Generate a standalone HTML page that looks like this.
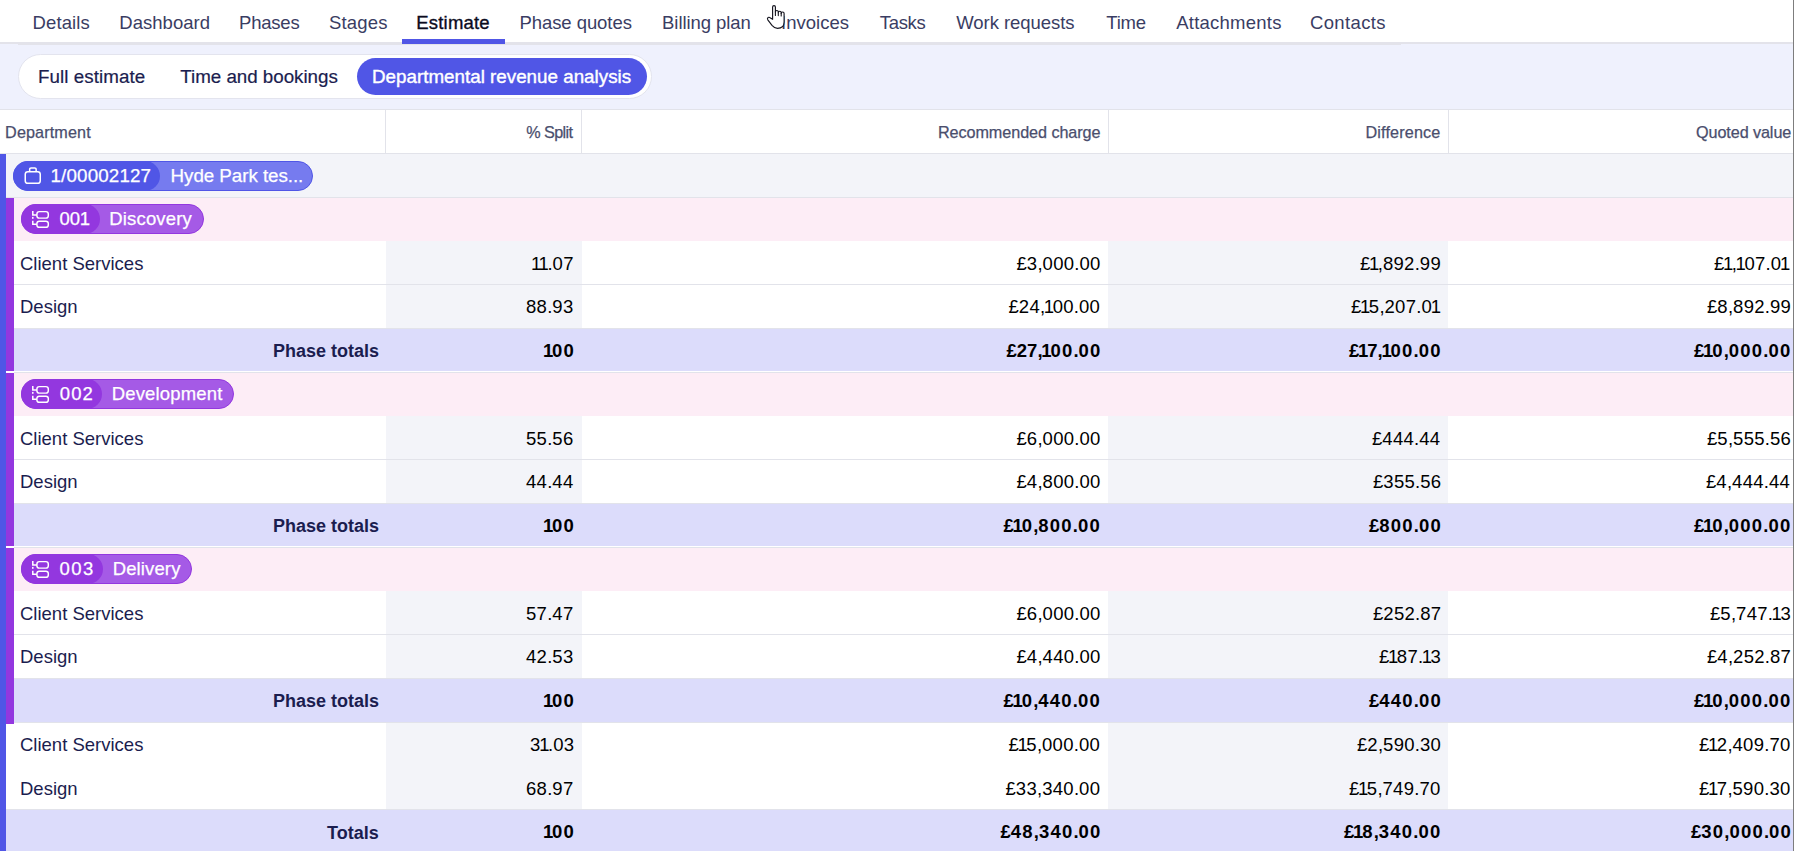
<!DOCTYPE html><html><head><meta charset="utf-8"><style>
*{box-sizing:border-box;margin:0;padding:0}
html,body{width:1794px;height:851px;overflow:hidden;background:#fff;font-family:"Liberation Sans", sans-serif}
.abs{position:absolute}
.t{position:absolute;white-space:nowrap;line-height:1}
</style></head><body>
<div class="abs" style="left:0px;top:42px;width:1794px;height:2px;background:#e3e3ea;"></div>
<div class="abs" style="left:18px;top:44px;width:1383px;height:1px;background:#e3e3ea;"></div>
<div class="abs" style="left:402px;top:39px;width:103px;height:5px;background:#5056e6;"></div>
<div class="t" style="left:32.6px;top:14.14px;font-size:18.5px;color:#3a3d63;font-weight:400;letter-spacing:0.083px;">Details</div>
<div class="t" style="left:119.3px;top:14.14px;font-size:18.5px;color:#3a3d63;font-weight:400;letter-spacing:0.025px;">Dashboard</div>
<div class="t" style="left:239px;top:14.14px;font-size:18.5px;color:#3a3d63;font-weight:400;letter-spacing:-0.2px;">Phases</div>
<div class="t" style="left:329px;top:14.14px;font-size:18.5px;color:#3a3d63;font-weight:400;letter-spacing:0.18px;">Stages</div>
<div class="t" style="left:416.3px;top:14.14px;font-size:18.5px;color:#0b0b1e;font-weight:400;-webkit-text-stroke:0.35px #0b0b1e;letter-spacing:0.186px;">Estimate</div>
<div class="t" style="left:519.4px;top:14.14px;font-size:18.5px;color:#3a3d63;font-weight:400;letter-spacing:-0.055px;">Phase quotes</div>
<div class="t" style="left:662.1px;top:14.14px;font-size:18.5px;color:#3a3d63;font-weight:400;letter-spacing:-0.082px;">Billing plan</div>
<div class="t" style="right:945.02px;top:14.14px;font-size:18.5px;color:#3a3d63;font-weight:400;">Invoices</div>
<div class="t" style="left:879.7px;top:14.14px;font-size:18.5px;color:#3a3d63;font-weight:400;letter-spacing:-0.3px;">Tasks</div>
<div class="t" style="left:956.3px;top:14.14px;font-size:18.5px;color:#3a3d63;font-weight:400;letter-spacing:-0.05px;">Work requests</div>
<div class="t" style="left:1106.3px;top:14.14px;font-size:18.5px;color:#3a3d63;font-weight:400;letter-spacing:-0.233px;">Time</div>
<div class="t" style="left:1176.3px;top:14.14px;font-size:18.5px;color:#3a3d63;font-weight:400;letter-spacing:0.23px;">Attachments</div>
<div class="t" style="left:1310px;top:14.14px;font-size:18.5px;color:#3a3d63;font-weight:400;letter-spacing:0.357px;">Contacts</div>
<div class="abs" style="left:0px;top:44px;width:18px;height:65px;background:#eff1fd;"></div>
<div class="abs" style="left:1401px;top:44px;width:393px;height:65px;background:#eff1fd;"></div>
<div class="abs" style="left:18px;top:45px;width:1383px;height:64px;background:#eff1fd;"></div>
<div class="abs" style="left:0px;top:109px;width:1794px;height:1px;background:#e2e3ea;"></div>
<div class="abs" style="left:18px;top:54px;width:634px;height:45px;background:#fff;border:1px solid #e3e4ee;border-radius:23px"></div>
<div class="abs" style="left:357px;top:58px;width:290px;height:37px;background:#5056e6;border-radius:19px"></div>
<div class="t" style="left:37.9px;top:67.89px;font-size:18.8px;color:#1b1d4f;font-weight:400;-webkit-text-stroke:0.2px #1b1d4f;letter-spacing:0.067px;">Full estimate</div>
<div class="t" style="left:180.3px;top:67.89px;font-size:18.8px;color:#1b1d4f;font-weight:400;-webkit-text-stroke:0.2px #1b1d4f;letter-spacing:-0.031px;">Time and bookings</div>
<div class="t" style="left:372px;top:67.89px;font-size:18.8px;color:#fff;font-weight:400;-webkit-text-stroke:0.4px #fff;letter-spacing:0.007px;">Departmental revenue analysis</div>
<div class="abs" style="left:0px;top:153px;width:1794px;height:1px;background:#e2e3ea;"></div>
<div class="abs" style="left:385px;top:110px;width:1px;height:43px;background:#e2e3ea;"></div>
<div class="abs" style="left:581px;top:110px;width:1px;height:43px;background:#e2e3ea;"></div>
<div class="abs" style="left:1108px;top:110px;width:1px;height:43px;background:#e2e3ea;"></div>
<div class="abs" style="left:1448px;top:110px;width:1px;height:43px;background:#e2e3ea;"></div>
<div class="t" style="left:5.1px;top:123.59px;font-size:16.2px;color:#4a4e6d;font-weight:400;-webkit-text-stroke:0.25px #4a4e6d;letter-spacing:0.111px;">Department</div>
<div class="t" style="left:526.3px;top:123.59px;font-size:16.2px;color:#4a4e6d;font-weight:400;-webkit-text-stroke:0.25px #4a4e6d;letter-spacing:-0.617px;">% Split</div>
<div class="t" style="left:937.9px;top:123.59px;font-size:16.2px;color:#4a4e6d;font-weight:400;-webkit-text-stroke:0.25px #4a4e6d;letter-spacing:-0.065px;">Recommended charge</div>
<div class="t" style="left:1365.4px;top:123.59px;font-size:16.2px;color:#4a4e6d;font-weight:400;-webkit-text-stroke:0.25px #4a4e6d;letter-spacing:0.167px;">Difference</div>
<div class="t" style="left:1696px;top:123.59px;font-size:16.2px;color:#4a4e6d;font-weight:400;-webkit-text-stroke:0.25px #4a4e6d;letter-spacing:-0.091px;">Quoted value</div>
<div class="abs" style="left:0px;top:154px;width:1794px;height:43px;background:#f3f4f9;"></div>
<div class="abs" style="left:0px;top:197px;width:1794px;height:1px;background:#e2e3ea;"></div>
<div class="abs" style="left:0px;top:154px;width:6px;height:697px;background:#5056e6;"></div>
<div class="abs" style="left:13px;top:161px;width:300.3px;height:30px;background:#767bef;border-radius:15px;border:1px solid #5056e6"></div>
<div class="abs" style="left:13px;top:161px;width:147.3px;height:30px;background:#5056e6;border-radius:15px"></div>
<svg class="abs" style="left:24px;top:166px" width="18" height="19" viewBox="0 0 18 19"><rect x="1.25" y="5.65" width="15" height="11.6" rx="2.6" fill="none" stroke="#fff" stroke-width="1.5"/><path d="M5.65 5.65V3.4a1.4 1.4 0 0 1 1.4-1.45h3.7a1.4 1.4 0 0 1 1.4 1.45V5.65" fill="none" stroke="#fff" stroke-width="1.5"/></svg>
<div class="t" style="left:50.5px;top:167.09px;font-size:18.8px;color:#fff;font-weight:400;-webkit-text-stroke:0.25px #fff;letter-spacing:0.144px;">1/00002127</div>
<div class="t" style="left:170.6px;top:167.09px;font-size:18.8px;color:#fff;font-weight:400;-webkit-text-stroke:0.25px #fff;letter-spacing:-0.06px;">Hyde Park tes...</div>
<div class="abs" style="left:6px;top:198px;width:8px;height:173px;background:#9337df;"></div>
<div class="abs" style="left:14px;top:198px;width:1780px;height:43px;background:#fdedf6;"></div>
<div class="abs" style="left:21px;top:204px;width:183px;height:30px;background:#a55ae6;border-radius:15px;border:1px solid #9337df"></div>
<div class="abs" style="left:21px;top:204px;width:78.6px;height:30px;background:#9337df;border-radius:15px"></div>
<svg class="abs" style="left:28px;top:207px" width="26" height="24" viewBox="0 0 26 24"><rect x="8.9" y="4.6" width="11.4" height="6.5" rx="2.4" fill="none" stroke="#fff" stroke-width="1.45"/><rect x="8.9" y="14.2" width="11.4" height="6.1" rx="2.4" fill="none" stroke="#fff" stroke-width="1.45"/><path d="M4.8 3.9V7.9H8.9M4.8 13.7V17.3H8.9" fill="none" stroke="#fff" stroke-width="1.5"/><rect x="4.05" y="9.9" width="1.5" height="1.9" fill="#fff"/></svg>
<div class="t" style="left:59.5px;top:210.34px;font-size:18.5px;color:#fff;font-weight:400;-webkit-text-stroke:0.25px #fff;letter-spacing:-0.15px;">001</div>
<div class="t" style="left:109.3px;top:210.34px;font-size:18.5px;color:#fff;font-weight:400;-webkit-text-stroke:0.25px #fff;letter-spacing:0.162px;">Discovery</div>
<div class="abs" style="left:386px;top:241px;width:196px;height:43px;background:#f3f4f9;"></div>
<div class="abs" style="left:1108px;top:241px;width:340px;height:43px;background:#f3f4f9;"></div>
<div class="abs" style="left:14px;top:284px;width:1780px;height:1px;background:#e2e3ea;"></div>
<div class="t" style="left:20px;top:255.14px;font-size:18.5px;color:#1b1d4f;font-weight:400;">Client Services</div>
<div class="t" style="right:1220.28px;top:255.14px;font-size:18.5px;color:#000000;font-weight:400;"><span style="letter-spacing:-2.8px">1</span><span style="letter-spacing:-1.4px">1</span>.<span style="letter-spacing:0.3px">0</span><span style="letter-spacing:0.3px">7</span></div>
<div class="t" style="right:693.36px;top:255.14px;font-size:18.5px;color:#000000;font-weight:400;">£<span style="letter-spacing:0.3px">3</span>,<span style="letter-spacing:0.3px">0</span><span style="letter-spacing:0.3px">0</span><span style="letter-spacing:0.3px">0</span>.<span style="letter-spacing:0.3px">0</span><span style="letter-spacing:0.3px">0</span></div>
<div class="t" style="right:352.97px;top:255.14px;font-size:18.5px;color:#000000;font-weight:400;"><span style="letter-spacing:-1.4px">£</span><span style="letter-spacing:-1.4px">1</span>,<span style="letter-spacing:0.3px">8</span><span style="letter-spacing:0.3px">9</span><span style="letter-spacing:0.3px">2</span>.<span style="letter-spacing:0.3px">9</span><span style="letter-spacing:0.3px">9</span></div>
<div class="t" style="right:5.16px;top:255.14px;font-size:18.5px;color:#000000;font-weight:400;"><span style="letter-spacing:-1.4px">£</span><span style="letter-spacing:-1.4px">1</span><span style="letter-spacing:-1.4px">,</span><span style="letter-spacing:-1.4px">1</span><span style="letter-spacing:0.3px">0</span><span style="letter-spacing:0.3px">7</span>.<span style="letter-spacing:-1.1px">0</span><span style="letter-spacing:-1.4px">1</span></div>
<div class="abs" style="left:386px;top:285px;width:196px;height:43px;background:#f3f4f9;"></div>
<div class="abs" style="left:1108px;top:285px;width:340px;height:43px;background:#f3f4f9;"></div>
<div class="abs" style="left:14px;top:328px;width:1780px;height:1px;background:#e2e3ea;"></div>
<div class="t" style="left:20px;top:298.14px;font-size:18.5px;color:#1b1d4f;font-weight:400;">Design</div>
<div class="t" style="right:1220.48px;top:298.14px;font-size:18.5px;color:#000000;font-weight:400;"><span style="letter-spacing:0.3px">8</span><span style="letter-spacing:0.3px">8</span>.<span style="letter-spacing:0.3px">9</span><span style="letter-spacing:0.3px">3</span></div>
<div class="t" style="right:693.86px;top:298.14px;font-size:18.5px;color:#000000;font-weight:400;">£<span style="letter-spacing:0.3px">2</span><span style="letter-spacing:0.3px">4</span><span style="letter-spacing:-1.4px">,</span><span style="letter-spacing:-1.4px">1</span><span style="letter-spacing:0.3px">0</span><span style="letter-spacing:0.3px">0</span>.<span style="letter-spacing:0.3px">0</span><span style="letter-spacing:0.3px">0</span></div>
<div class="t" style="right:354.47px;top:298.14px;font-size:18.5px;color:#000000;font-weight:400;"><span style="letter-spacing:-1.4px">£</span><span style="letter-spacing:-1.4px">1</span><span style="letter-spacing:0.3px">5</span>,<span style="letter-spacing:0.3px">2</span><span style="letter-spacing:0.3px">0</span><span style="letter-spacing:0.3px">7</span>.<span style="letter-spacing:-1.1px">0</span><span style="letter-spacing:-1.4px">1</span></div>
<div class="t" style="right:2.86px;top:298.14px;font-size:18.5px;color:#000000;font-weight:400;">£<span style="letter-spacing:0.3px">8</span>,<span style="letter-spacing:0.3px">8</span><span style="letter-spacing:0.3px">9</span><span style="letter-spacing:0.3px">2</span>.<span style="letter-spacing:0.3px">9</span><span style="letter-spacing:0.3px">9</span></div>
<div class="abs" style="left:14px;top:329px;width:1780px;height:42px;background:#dcdcfb;"></div>
<div class="t" style="right:1414.95px;top:342.26px;font-size:18px;color:#1b1d4f;font-weight:700;">Phase totals</div>
<div class="t" style="right:1218.91px;top:341.84px;font-size:18.5px;color:#000000;font-weight:700;"><span style="letter-spacing:-1.2px">1</span><span style="letter-spacing:1.2px">0</span><span style="letter-spacing:1.2px">0</span></div>
<div class="t" style="right:692.44px;top:341.84px;font-size:18.5px;color:#000000;font-weight:700;">£27<span style="letter-spacing:-1.2px">,</span><span style="letter-spacing:-1.2px">1</span><span style="letter-spacing:1.2px">0</span><span style="letter-spacing:1.2px">0</span>.<span style="letter-spacing:1.2px">0</span><span style="letter-spacing:1.2px">0</span></div>
<div class="t" style="right:352.33px;top:341.84px;font-size:18.5px;color:#000000;font-weight:700;"><span style="letter-spacing:-1.2px">£</span><span style="letter-spacing:-1.2px">1</span>7<span style="letter-spacing:-1.2px">,</span><span style="letter-spacing:-1.2px">1</span><span style="letter-spacing:1.2px">0</span><span style="letter-spacing:1.2px">0</span>.<span style="letter-spacing:1.2px">0</span><span style="letter-spacing:1.2px">0</span></div>
<div class="t" style="right:2.53px;top:341.84px;font-size:18.5px;color:#000000;font-weight:700;"><span style="letter-spacing:-1.2px">£</span><span style="letter-spacing:-1.2px">1</span><span style="letter-spacing:1.2px">0</span>,<span style="letter-spacing:1.2px">0</span><span style="letter-spacing:1.2px">0</span><span style="letter-spacing:1.2px">0</span>.<span style="letter-spacing:1.2px">0</span><span style="letter-spacing:1.2px">0</span></div>
<div class="abs" style="left:14px;top:372px;width:1780px;height:1px;background:#e2e3ea;"></div>
<div class="abs" style="left:6px;top:373px;width:8px;height:173px;background:#9337df;"></div>
<div class="abs" style="left:14px;top:373px;width:1780px;height:43px;background:#fdedf6;"></div>
<div class="abs" style="left:21px;top:379px;width:212.7px;height:30px;background:#a55ae6;border-radius:15px;border:1px solid #9337df"></div>
<div class="abs" style="left:21px;top:379px;width:81px;height:30px;background:#9337df;border-radius:15px"></div>
<svg class="abs" style="left:28px;top:382px" width="26" height="24" viewBox="0 0 26 24"><rect x="8.9" y="4.6" width="11.4" height="6.5" rx="2.4" fill="none" stroke="#fff" stroke-width="1.45"/><rect x="8.9" y="14.2" width="11.4" height="6.1" rx="2.4" fill="none" stroke="#fff" stroke-width="1.45"/><path d="M4.8 3.9V7.9H8.9M4.8 13.7V17.3H8.9" fill="none" stroke="#fff" stroke-width="1.5"/><rect x="4.05" y="9.9" width="1.5" height="1.9" fill="#fff"/></svg>
<div class="t" style="left:59.8px;top:385.34px;font-size:18.5px;color:#fff;font-weight:400;-webkit-text-stroke:0.25px #fff;letter-spacing:1.05px;">002</div>
<div class="t" style="left:111.7px;top:385.34px;font-size:18.5px;color:#fff;font-weight:400;-webkit-text-stroke:0.25px #fff;letter-spacing:0.17px;">Development</div>
<div class="abs" style="left:386px;top:416px;width:196px;height:43px;background:#f3f4f9;"></div>
<div class="abs" style="left:1108px;top:416px;width:340px;height:43px;background:#f3f4f9;"></div>
<div class="abs" style="left:14px;top:459px;width:1780px;height:1px;background:#e2e3ea;"></div>
<div class="t" style="left:20px;top:430.14px;font-size:18.5px;color:#1b1d4f;font-weight:400;">Client Services</div>
<div class="t" style="right:1220.48px;top:430.14px;font-size:18.5px;color:#000000;font-weight:400;"><span style="letter-spacing:0.3px">5</span><span style="letter-spacing:0.3px">5</span>.<span style="letter-spacing:0.3px">5</span><span style="letter-spacing:0.3px">6</span></div>
<div class="t" style="right:693.36px;top:430.14px;font-size:18.5px;color:#000000;font-weight:400;">£<span style="letter-spacing:0.3px">6</span>,<span style="letter-spacing:0.3px">0</span><span style="letter-spacing:0.3px">0</span><span style="letter-spacing:0.3px">0</span>.<span style="letter-spacing:0.3px">0</span><span style="letter-spacing:0.3px">0</span></div>
<div class="t" style="right:353.59px;top:430.14px;font-size:18.5px;color:#000000;font-weight:400;">£<span style="letter-spacing:0.3px">4</span><span style="letter-spacing:0.3px">4</span><span style="letter-spacing:0.3px">4</span>.<span style="letter-spacing:0.3px">4</span><span style="letter-spacing:0.3px">4</span></div>
<div class="t" style="right:2.86px;top:430.14px;font-size:18.5px;color:#000000;font-weight:400;">£<span style="letter-spacing:0.3px">5</span>,<span style="letter-spacing:0.3px">5</span><span style="letter-spacing:0.3px">5</span><span style="letter-spacing:0.3px">5</span>.<span style="letter-spacing:0.3px">5</span><span style="letter-spacing:0.3px">6</span></div>
<div class="abs" style="left:386px;top:460px;width:196px;height:43px;background:#f3f4f9;"></div>
<div class="abs" style="left:1108px;top:460px;width:340px;height:43px;background:#f3f4f9;"></div>
<div class="abs" style="left:14px;top:503px;width:1780px;height:1px;background:#e2e3ea;"></div>
<div class="t" style="left:20px;top:473.14px;font-size:18.5px;color:#1b1d4f;font-weight:400;">Design</div>
<div class="t" style="right:1220.48px;top:473.14px;font-size:18.5px;color:#000000;font-weight:400;"><span style="letter-spacing:0.3px">4</span><span style="letter-spacing:0.3px">4</span>.<span style="letter-spacing:0.3px">4</span><span style="letter-spacing:0.3px">4</span></div>
<div class="t" style="right:693.36px;top:473.14px;font-size:18.5px;color:#000000;font-weight:400;">£<span style="letter-spacing:0.3px">4</span>,<span style="letter-spacing:0.3px">8</span><span style="letter-spacing:0.3px">0</span><span style="letter-spacing:0.3px">0</span>.<span style="letter-spacing:0.3px">0</span><span style="letter-spacing:0.3px">0</span></div>
<div class="t" style="right:352.59px;top:473.14px;font-size:18.5px;color:#000000;font-weight:400;">£<span style="letter-spacing:0.3px">3</span><span style="letter-spacing:0.3px">5</span><span style="letter-spacing:0.3px">5</span>.<span style="letter-spacing:0.3px">5</span><span style="letter-spacing:0.3px">6</span></div>
<div class="t" style="right:3.86px;top:473.14px;font-size:18.5px;color:#000000;font-weight:400;">£<span style="letter-spacing:0.3px">4</span>,<span style="letter-spacing:0.3px">4</span><span style="letter-spacing:0.3px">4</span><span style="letter-spacing:0.3px">4</span>.<span style="letter-spacing:0.3px">4</span><span style="letter-spacing:0.3px">4</span></div>
<div class="abs" style="left:14px;top:504px;width:1780px;height:42px;background:#dcdcfb;"></div>
<div class="t" style="right:1414.95px;top:517.26px;font-size:18px;color:#1b1d4f;font-weight:700;">Phase totals</div>
<div class="t" style="right:1218.91px;top:516.84px;font-size:18.5px;color:#000000;font-weight:700;"><span style="letter-spacing:-1.2px">1</span><span style="letter-spacing:1.2px">0</span><span style="letter-spacing:1.2px">0</span></div>
<div class="t" style="right:693.03px;top:516.84px;font-size:18.5px;color:#000000;font-weight:700;"><span style="letter-spacing:-1.2px">£</span><span style="letter-spacing:-1.2px">1</span><span style="letter-spacing:1.2px">0</span>,<span style="letter-spacing:1.2px">8</span><span style="letter-spacing:1.2px">0</span><span style="letter-spacing:1.2px">0</span>.<span style="letter-spacing:1.2px">0</span><span style="letter-spacing:1.2px">0</span></div>
<div class="t" style="right:352.06px;top:516.84px;font-size:18.5px;color:#000000;font-weight:700;">£<span style="letter-spacing:1.2px">8</span><span style="letter-spacing:1.2px">0</span><span style="letter-spacing:1.2px">0</span>.<span style="letter-spacing:1.2px">0</span><span style="letter-spacing:1.2px">0</span></div>
<div class="t" style="right:2.53px;top:516.84px;font-size:18.5px;color:#000000;font-weight:700;"><span style="letter-spacing:-1.2px">£</span><span style="letter-spacing:-1.2px">1</span><span style="letter-spacing:1.2px">0</span>,<span style="letter-spacing:1.2px">0</span><span style="letter-spacing:1.2px">0</span><span style="letter-spacing:1.2px">0</span>.<span style="letter-spacing:1.2px">0</span><span style="letter-spacing:1.2px">0</span></div>
<div class="abs" style="left:14px;top:547px;width:1780px;height:1px;background:#e2e3ea;"></div>
<div class="abs" style="left:6px;top:548px;width:8px;height:176px;background:#9337df;"></div>
<div class="abs" style="left:14px;top:548px;width:1780px;height:43px;background:#fdedf6;"></div>
<div class="abs" style="left:21px;top:554px;width:171px;height:30px;background:#a55ae6;border-radius:15px;border:1px solid #9337df"></div>
<div class="abs" style="left:21px;top:554px;width:82px;height:30px;background:#9337df;border-radius:15px"></div>
<svg class="abs" style="left:28px;top:557px" width="26" height="24" viewBox="0 0 26 24"><rect x="8.9" y="4.6" width="11.4" height="6.5" rx="2.4" fill="none" stroke="#fff" stroke-width="1.45"/><rect x="8.9" y="14.2" width="11.4" height="6.1" rx="2.4" fill="none" stroke="#fff" stroke-width="1.45"/><path d="M4.8 3.9V7.9H8.9M4.8 13.7V17.3H8.9" fill="none" stroke="#fff" stroke-width="1.5"/><rect x="4.05" y="9.9" width="1.5" height="1.9" fill="#fff"/></svg>
<div class="t" style="left:59.5px;top:560.34px;font-size:18.5px;color:#fff;font-weight:400;-webkit-text-stroke:0.25px #fff;letter-spacing:1.4px;">003</div>
<div class="t" style="left:112.7px;top:560.34px;font-size:18.5px;color:#fff;font-weight:400;-webkit-text-stroke:0.25px #fff;letter-spacing:0.129px;">Delivery</div>
<div class="abs" style="left:386px;top:591px;width:196px;height:43px;background:#f3f4f9;"></div>
<div class="abs" style="left:1108px;top:591px;width:340px;height:43px;background:#f3f4f9;"></div>
<div class="abs" style="left:14px;top:634px;width:1780px;height:1px;background:#e2e3ea;"></div>
<div class="t" style="left:20px;top:605.14px;font-size:18.5px;color:#1b1d4f;font-weight:400;">Client Services</div>
<div class="t" style="right:1220.48px;top:605.14px;font-size:18.5px;color:#000000;font-weight:400;"><span style="letter-spacing:0.3px">5</span><span style="letter-spacing:0.3px">7</span>.<span style="letter-spacing:0.3px">4</span><span style="letter-spacing:0.3px">7</span></div>
<div class="t" style="right:693.36px;top:605.14px;font-size:18.5px;color:#000000;font-weight:400;">£<span style="letter-spacing:0.3px">6</span>,<span style="letter-spacing:0.3px">0</span><span style="letter-spacing:0.3px">0</span><span style="letter-spacing:0.3px">0</span>.<span style="letter-spacing:0.3px">0</span><span style="letter-spacing:0.3px">0</span></div>
<div class="t" style="right:352.59px;top:605.14px;font-size:18.5px;color:#000000;font-weight:400;">£<span style="letter-spacing:0.3px">2</span><span style="letter-spacing:0.3px">5</span><span style="letter-spacing:0.3px">2</span>.<span style="letter-spacing:0.3px">8</span><span style="letter-spacing:0.3px">7</span></div>
<div class="t" style="right:2.95px;top:605.14px;font-size:18.5px;color:#000000;font-weight:400;">£<span style="letter-spacing:0.3px">5</span>,<span style="letter-spacing:0.3px">7</span><span style="letter-spacing:0.3px">4</span><span style="letter-spacing:0.3px">7</span><span style="letter-spacing:-1.4px">.</span><span style="letter-spacing:-1.4px">1</span><span style="letter-spacing:0.3px">3</span></div>
<div class="abs" style="left:386px;top:635px;width:196px;height:43px;background:#f3f4f9;"></div>
<div class="abs" style="left:1108px;top:635px;width:340px;height:43px;background:#f3f4f9;"></div>
<div class="abs" style="left:14px;top:678px;width:1780px;height:1px;background:#e2e3ea;"></div>
<div class="t" style="left:20px;top:648.14px;font-size:18.5px;color:#1b1d4f;font-weight:400;">Design</div>
<div class="t" style="right:1220.48px;top:648.14px;font-size:18.5px;color:#000000;font-weight:400;"><span style="letter-spacing:0.3px">4</span><span style="letter-spacing:0.3px">2</span>.<span style="letter-spacing:0.3px">5</span><span style="letter-spacing:0.3px">3</span></div>
<div class="t" style="right:693.36px;top:648.14px;font-size:18.5px;color:#000000;font-weight:400;">£<span style="letter-spacing:0.3px">4</span>,<span style="letter-spacing:0.3px">4</span><span style="letter-spacing:0.3px">4</span><span style="letter-spacing:0.3px">0</span>.<span style="letter-spacing:0.3px">0</span><span style="letter-spacing:0.3px">0</span></div>
<div class="t" style="right:352.8px;top:648.14px;font-size:18.5px;color:#000000;font-weight:400;"><span style="letter-spacing:-1.4px">£</span><span style="letter-spacing:-1.4px">1</span><span style="letter-spacing:0.3px">8</span><span style="letter-spacing:0.3px">7</span><span style="letter-spacing:-1.4px">.</span><span style="letter-spacing:-1.4px">1</span><span style="letter-spacing:0.3px">3</span></div>
<div class="t" style="right:2.86px;top:648.14px;font-size:18.5px;color:#000000;font-weight:400;">£<span style="letter-spacing:0.3px">4</span>,<span style="letter-spacing:0.3px">2</span><span style="letter-spacing:0.3px">5</span><span style="letter-spacing:0.3px">2</span>.<span style="letter-spacing:0.3px">8</span><span style="letter-spacing:0.3px">7</span></div>
<div class="abs" style="left:14px;top:679px;width:1780px;height:43px;background:#dcdcfb;"></div>
<div class="t" style="right:1414.95px;top:692.26px;font-size:18px;color:#1b1d4f;font-weight:700;">Phase totals</div>
<div class="t" style="right:1218.91px;top:691.84px;font-size:18.5px;color:#000000;font-weight:700;"><span style="letter-spacing:-1.2px">1</span><span style="letter-spacing:1.2px">0</span><span style="letter-spacing:1.2px">0</span></div>
<div class="t" style="right:693.03px;top:691.84px;font-size:18.5px;color:#000000;font-weight:700;"><span style="letter-spacing:-1.2px">£</span><span style="letter-spacing:-1.2px">1</span><span style="letter-spacing:1.2px">0</span>,<span style="letter-spacing:1.2px">4</span><span style="letter-spacing:1.2px">4</span><span style="letter-spacing:1.2px">0</span>.<span style="letter-spacing:1.2px">0</span><span style="letter-spacing:1.2px">0</span></div>
<div class="t" style="right:352.06px;top:691.84px;font-size:18.5px;color:#000000;font-weight:700;">£<span style="letter-spacing:1.2px">4</span><span style="letter-spacing:1.2px">4</span><span style="letter-spacing:1.2px">0</span>.<span style="letter-spacing:1.2px">0</span><span style="letter-spacing:1.2px">0</span></div>
<div class="t" style="right:2.53px;top:691.84px;font-size:18.5px;color:#000000;font-weight:700;"><span style="letter-spacing:-1.2px">£</span><span style="letter-spacing:-1.2px">1</span><span style="letter-spacing:1.2px">0</span>,<span style="letter-spacing:1.2px">0</span><span style="letter-spacing:1.2px">0</span><span style="letter-spacing:1.2px">0</span>.<span style="letter-spacing:1.2px">0</span><span style="letter-spacing:1.2px">0</span></div>
<div class="abs" style="left:14px;top:722px;width:1780px;height:1px;background:#e2e3ea;"></div>
<div class="abs" style="left:386px;top:723px;width:196px;height:43px;background:#f3f4f9;"></div>
<div class="abs" style="left:1108px;top:723px;width:340px;height:43px;background:#f3f4f9;"></div>
<div class="t" style="left:20px;top:736.14px;font-size:18.5px;color:#1b1d4f;font-weight:400;">Client Services</div>
<div class="t" style="right:1219.58px;top:736.14px;font-size:18.5px;color:#000000;font-weight:400;"><span style="letter-spacing:-1.1px">3</span><span style="letter-spacing:-1.4px">1</span>.<span style="letter-spacing:0.3px">0</span><span style="letter-spacing:0.3px">3</span></div>
<div class="t" style="right:693.88px;top:736.14px;font-size:18.5px;color:#000000;font-weight:400;"><span style="letter-spacing:-1.4px">£</span><span style="letter-spacing:-1.4px">1</span><span style="letter-spacing:0.3px">5</span>,<span style="letter-spacing:0.3px">0</span><span style="letter-spacing:0.3px">0</span><span style="letter-spacing:0.3px">0</span>.<span style="letter-spacing:0.3px">0</span><span style="letter-spacing:0.3px">0</span></div>
<div class="t" style="right:352.86px;top:736.14px;font-size:18.5px;color:#000000;font-weight:400;">£<span style="letter-spacing:0.3px">2</span>,<span style="letter-spacing:0.3px">5</span><span style="letter-spacing:0.3px">9</span><span style="letter-spacing:0.3px">0</span>.<span style="letter-spacing:0.3px">3</span><span style="letter-spacing:0.3px">0</span></div>
<div class="t" style="right:3.38px;top:736.14px;font-size:18.5px;color:#000000;font-weight:400;"><span style="letter-spacing:-1.4px">£</span><span style="letter-spacing:-1.4px">1</span><span style="letter-spacing:0.3px">2</span>,<span style="letter-spacing:0.3px">4</span><span style="letter-spacing:0.3px">0</span><span style="letter-spacing:0.3px">9</span>.<span style="letter-spacing:0.3px">7</span><span style="letter-spacing:0.3px">0</span></div>
<div class="abs" style="left:386px;top:766px;width:196px;height:43px;background:#f3f4f9;"></div>
<div class="abs" style="left:1108px;top:766px;width:340px;height:43px;background:#f3f4f9;"></div>
<div class="abs" style="left:6px;top:809px;width:1788px;height:1px;background:#e2e3ea;"></div>
<div class="t" style="left:20px;top:780.14px;font-size:18.5px;color:#1b1d4f;font-weight:400;">Design</div>
<div class="t" style="right:1220.48px;top:780.14px;font-size:18.5px;color:#000000;font-weight:400;"><span style="letter-spacing:0.3px">6</span><span style="letter-spacing:0.3px">8</span>.<span style="letter-spacing:0.3px">9</span><span style="letter-spacing:0.3px">7</span></div>
<div class="t" style="right:693.77px;top:780.14px;font-size:18.5px;color:#000000;font-weight:400;">£<span style="letter-spacing:0.3px">3</span><span style="letter-spacing:0.3px">3</span>,<span style="letter-spacing:0.3px">3</span><span style="letter-spacing:0.3px">4</span><span style="letter-spacing:0.3px">0</span>.<span style="letter-spacing:0.3px">0</span><span style="letter-spacing:0.3px">0</span></div>
<div class="t" style="right:353.38px;top:780.14px;font-size:18.5px;color:#000000;font-weight:400;"><span style="letter-spacing:-1.4px">£</span><span style="letter-spacing:-1.4px">1</span><span style="letter-spacing:0.3px">5</span>,<span style="letter-spacing:0.3px">7</span><span style="letter-spacing:0.3px">4</span><span style="letter-spacing:0.3px">9</span>.<span style="letter-spacing:0.3px">7</span><span style="letter-spacing:0.3px">0</span></div>
<div class="t" style="right:3.38px;top:780.14px;font-size:18.5px;color:#000000;font-weight:400;"><span style="letter-spacing:-1.4px">£</span><span style="letter-spacing:-1.4px">1</span><span style="letter-spacing:0.3px">7</span>,<span style="letter-spacing:0.3px">5</span><span style="letter-spacing:0.3px">9</span><span style="letter-spacing:0.3px">0</span>.<span style="letter-spacing:0.3px">3</span><span style="letter-spacing:0.3px">0</span></div>
<div class="abs" style="left:6px;top:810px;width:1788px;height:41px;background:#dcdcfb;"></div>
<div class="t" style="right:1415.33px;top:823.56px;font-size:18px;color:#1b1d4f;font-weight:700;">Totals</div>
<div class="t" style="right:1218.91px;top:823.14px;font-size:18.5px;color:#000000;font-weight:700;"><span style="letter-spacing:-1.2px">1</span><span style="letter-spacing:1.2px">0</span><span style="letter-spacing:1.2px">0</span></div>
<div class="t" style="right:692.42px;top:823.14px;font-size:18.5px;color:#000000;font-weight:700;">£<span style="letter-spacing:1.2px">4</span><span style="letter-spacing:1.2px">8</span>,<span style="letter-spacing:1.2px">3</span><span style="letter-spacing:1.2px">4</span><span style="letter-spacing:1.2px">0</span>.<span style="letter-spacing:1.2px">0</span><span style="letter-spacing:1.2px">0</span></div>
<div class="t" style="right:352.53px;top:823.14px;font-size:18.5px;color:#000000;font-weight:700;"><span style="letter-spacing:-1.2px">£</span><span style="letter-spacing:-1.2px">1</span><span style="letter-spacing:1.2px">8</span>,<span style="letter-spacing:1.2px">3</span><span style="letter-spacing:1.2px">4</span><span style="letter-spacing:1.2px">0</span>.<span style="letter-spacing:1.2px">0</span><span style="letter-spacing:1.2px">0</span></div>
<div class="t" style="right:1.92px;top:823.14px;font-size:18.5px;color:#000000;font-weight:700;">£<span style="letter-spacing:1.2px">3</span><span style="letter-spacing:1.2px">0</span>,<span style="letter-spacing:1.2px">0</span><span style="letter-spacing:1.2px">0</span><span style="letter-spacing:1.2px">0</span>.<span style="letter-spacing:1.2px">0</span><span style="letter-spacing:1.2px">0</span></div>
<div class="abs" style="left:1793px;top:0px;width:1px;height:851px;background:#7d7d7d;"></div>
<svg class="abs" style="left:764px;top:2px" width="24" height="30" viewBox="0 0 24 30"><path d="M8.6 17.3L8.6 5A1.4 1.4 0 0 1 11.4 5L11.4 9.9A1.45 1.45 0 0 1 14.3 9.9L14.3 10.7A1.45 1.45 0 0 1 17.2 10.7L17.2 11.4A1.45 1.45 0 0 1 20.1 11.4L20.1 20Q20.1 26.3 13.5 26.3Q10.5 26.3 8 23.3L3.8 17.8Q3 16.5 4 15.6Q5.2 14.8 6.5 16L8.6 17.3Z" fill="#fff" stroke="#15151f" stroke-width="1.15" stroke-linejoin="round"/><path d="M11.4 9.9V13.4M14.3 10.7V13.6M17.2 11.4V13.9" stroke="#15151f" stroke-width="1.1" fill="none" stroke-linecap="round"/></svg>
</body></html>
